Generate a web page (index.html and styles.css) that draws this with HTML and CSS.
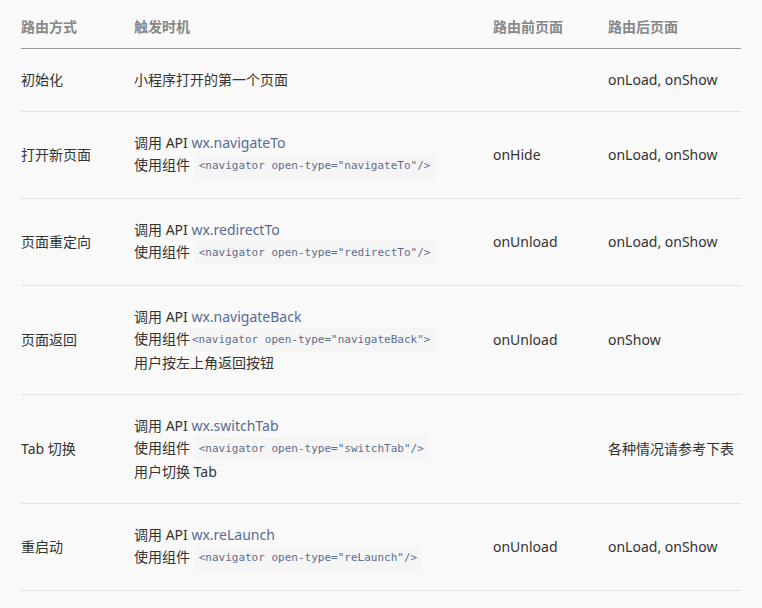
FILE: index.html
```html
<!DOCTYPE html>
<html lang="zh-CN">
<head>
<meta charset="utf-8">
<title>路由方式</title>
<link rel="stylesheet" href="styles.css">
</head>
<body>
<div class="page">
  <table class="routes">
    <colgroup>
      <col class="c1"><col class="c2"><col class="c3"><col class="c4">
    </colgroup>
    <thead>
      <tr><th>路由方式</th><th>触发时机</th><th>路由前页面</th><th>路由后页面</th></tr>
    </thead>
    <tbody>
      <tr>
        <td>初始化</td>
        <td>小程序打开的第一个页面</td>
        <td></td>
        <td>onLoad, onShow</td>
      </tr>
      <tr>
        <td>打开新页面</td>
        <td>调用 API <span class="link">wx.navigateTo</span><br>使用组件 <code>&lt;navigator open-type="navigateTo"/&gt;</code></td>
        <td>onHide</td>
        <td>onLoad, onShow</td>
      </tr>
      <tr>
        <td>页面重定向</td>
        <td>调用 API <span class="link">wx.redirectTo</span><br>使用组件 <code>&lt;navigator open-type="redirectTo"/&gt;</code></td>
        <td>onUnload</td>
        <td>onLoad, onShow</td>
      </tr>
      <tr>
        <td>页面返回</td>
        <td>调用 API <span class="link">wx.navigateBack</span><br>使用组件<code class="tight">&lt;navigator open-type="navigateBack"&gt;</code><br>用户按左上角返回按钮</td>
        <td>onUnload</td>
        <td>onShow</td>
      </tr>
      <tr>
        <td>Tab 切换</td>
        <td>调用 API <span class="link">wx.switchTab</span><br>使用组件 <code>&lt;navigator open-type="switchTab"/&gt;</code><br>用户切换 Tab</td>
        <td></td>
        <td>各种情况请参考下表</td>
      </tr>
      <tr>
        <td>重启动</td>
        <td>调用 API <span class="link">wx.reLaunch</span><br>使用组件 <code>&lt;navigator open-type="reLaunch"/&gt;</code></td>
        <td>onUnload</td>
        <td>onLoad, onShow</td>
      </tr>
    </tbody>
  </table>
</div>
</body>
</html>
```
FILE: styles.css
```css
html, body {
  margin: 0;
  padding: 0;
  background: #f9f9f9;
}
.page {
  padding: 0 21px;
  font-family: "Noto Sans", "Noto Sans CJK SC", sans-serif;
  font-size: 14px;
  line-height: 22px;
  color: #333;
}
.routes {
  width: 720px;
  border-collapse: collapse;
  table-layout: fixed;
}
.c1 { width: 113px; }
.c2 { width: 359px; }
.c3 { width: 115px; }
.c4 { width: 133px; }
.routes th {
  text-align: left;
  font-weight: bold;
  color: #888;
  padding: 16px 0 10px;
  border-bottom: 1px solid #999;
}
.routes td {
  padding: 20px 0;
  vertical-align: middle;
  border-bottom: 1px solid #e3e3e3;
  white-space: nowrap;
}
.link {
  color: #576b95;
}
code {
  display: inline-block;
  font-family: "DejaVu Sans Mono", monospace;
  font-size: 11px;
  line-height: 20px;
  padding: 2px 5px;
  color: #5f6d8c;
  background: #f5f5f5;
  vertical-align: top;
}
code.tight {
  padding-left: 2px;
}
```
